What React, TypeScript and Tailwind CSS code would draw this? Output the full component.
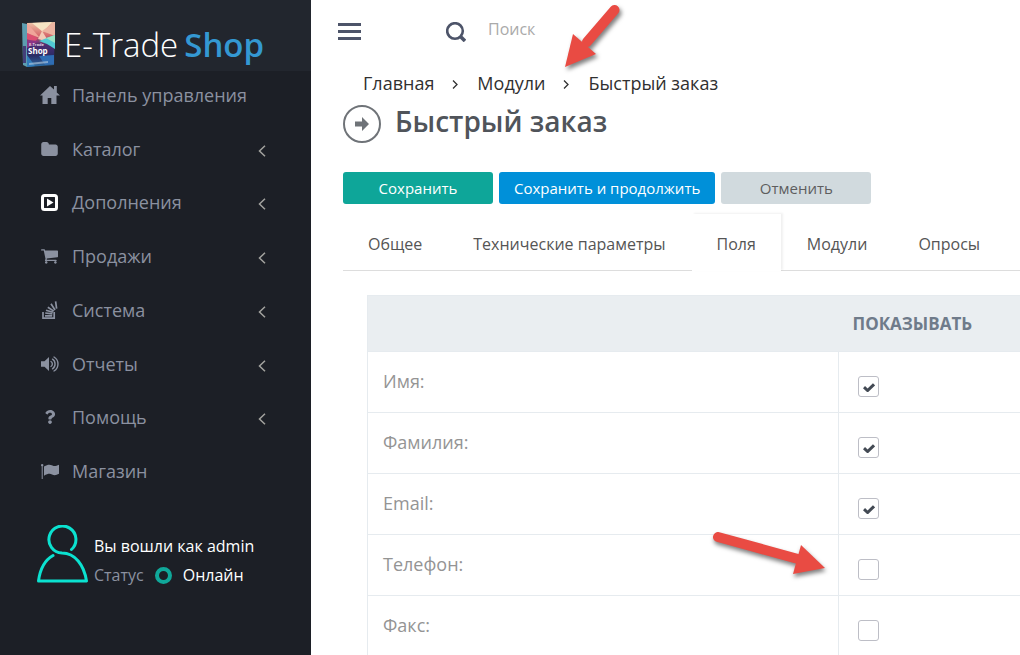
import type { ReactNode } from "react";
import { FaQuestion } from "react-icons/fa";
import clsx from "clsx";

function HomeIcon() {
  return (
    <svg viewBox="0 0 20 18" className="h-[18px] w-5 fill-current">
      <path d="M10 0 0 9.500h2.500V18h5.200v-6h3.600v6h5.200V9.500H20l-3.200-3V0h-2.800v3.600z" />
    </svg>
  );
}

function FolderIcon() {
  return (
    <svg viewBox="0 0 1664 1408" className="h-[14px] w-[17px] fill-current">
      <path d="M1664 480v704q0 92-66 158t-158 66H224q-92 0-158-66T0 1184V224q0-92 66-158T224 0h320q92 0 158 66t66 158v32h672q92 0 158 66t66 158z" />
    </svg>
  );
}

function PlayBoxIcon() {
  return (
    <svg viewBox="0 0 17 17" className="h-[17px] w-[17px] text-white">
      <rect x="1.500" y="1.500" width="14" height="14" rx="2" fill="none" stroke="currentColor" strokeWidth="3" />
      <path d="M6 4.500v8l6.500-4z" fill="currentColor" />
    </svg>
  );
}

function CartIcon() {
  return (
    <svg viewBox="0 0 1664 1408" className="h-[15px] w-[17px] fill-current">
      <path d="M640 1280q0 52-38 90t-90 38-90-38-38-90 38-90 90-38 90 38 38 90zm896 0q0 52-38 90t-90 38-90-38-38-90 38-90 90-38 90 38 38 90zm128-1088v512q0 24-16.500 42.500t-40.500 21.500l-1044 122q13 60 13 70 0 16-24 64h920q26 0 45 19t19 45-19 45-45 19H448q-26 0-45-19t-19-45q0-11 8-31.500t16-36 21.500-40 15.500-29.500L268 128H64q-26 0-45-19T0 64t19-45T64 0h256q16 0 28.500 6.500T368 22t13 24.500 8 26 5.500 29.500 4.500 26h1201q26 0 45 19t19 45z" />
    </svg>
  );
}

function StackIcon() {
  return (
    <svg viewBox="0 0 16 18" className="h-[18px] w-4" fill="none" stroke="currentColor" strokeWidth="1.700">
      <path d="M1 11v6.200h11.200V11" />
      <path d="M3 14.800h7.200M3.200 12l7.200.8M4 9.200l6.900 2.100M5.800 6.200l6 3.900M9 2.800l4 6.200M13.600.3l1 7.400" />
    </svg>
  );
}

function VolumeIcon() {
  return (
    <svg viewBox="0 0 18 16" className="h-4 w-[18px]" fill="none" stroke="currentColor" strokeWidth="1.400" strokeLinecap="round">
      <path d="M0 5.200h3.500L8 1v14l-4.500-4.200H0z" fill="currentColor" stroke="none" />
      <path d="M10 5.500c1.800 1 1.800 4 0 5M11.500 3.200c3.400 2 3.400 7.600 0 9.600M13 1c5.300 3 5.300 11 0 14" />
    </svg>
  );
}

function FlagIcon() {
  return (
    <svg viewBox="0 0 18 15" className="h-[15px] w-[18px] fill-current">
      <path d="M0 1.200a1.200 1.200 0 1 1 1.700 1.100V15H.7V2.300A1.200 1.200 0 0 1 0 1.200zM3 2.400C7 .2 9 .3 11.500 1.600c2 1 3.700.4 6.500-.9v9c-2.800 1.500-4.500 2-7 .7-2.200-1-4.500-.6-8 1.300z" />
    </svg>
  );
}

function UserIcon() {
  return (
    <svg viewBox="0 0 51 58" className="h-[58px] w-[51px] shrink-0 text-[#0be2d0]" fill="none" stroke="currentColor" strokeWidth="3" strokeLinecap="round" strokeLinejoin="round">
      <path d="M34.500 24.500A13.500 13.500 0 1 0 25 28c13 0 22 12 24.500 28h-48C3 44.500 8 35 16 30.500" />
    </svg>
  );
}

function ChevronIcon() {
  return (
    <svg viewBox="0 0 7 9" className="mx-[18px] mt-[3px] h-[9px] w-[7px]" fill="none" stroke="currentColor" strokeWidth="1.300">
      <path d="M1 .5 5 4.500 1 8.500" />
    </svg>
  );
}

function BoxLogo() {
  return (
    <svg viewBox="0 0 34 46" className="h-[46px] w-[34px] shrink-0">
      <defs>
        <linearGradient id="cover" x1="0" y1="0" x2="0" y2="1">
          <stop offset="0" stopColor="#efc6a8" />
          <stop offset=".3" stopColor="#d66a6c" />
          <stop offset=".5" stopColor="#4e2d72" />
          <stop offset=".75" stopColor="#2b2c66" />
          <stop offset="1" stopColor="#2a6fa5" />
        </linearGradient>
      </defs>
      <path d="M0 1 5 2v43l-4-2z" fill="#5d9db0" />
      <path d="M1 24h3v17H1z" fill="#43407a" />
      <path d="M5 1 33 0l-1 43-27 2z" fill="url(#cover)" />
      <path d="m5 1 13 15L5 11z" fill="#f0a59a" />
      <path d="m10 1 11 9L30 0z" fill="#f7e5c4" />
      <path d="m33 0-13 9 13 5z" fill="#ecb5a2" />
      <path d="m20 9-4 8 11 3z" fill="#f3cbb7" />
      <path d="m5 11 11 5-3 4-8-3z" fill="#dc4f72" />
      <path d="m33 13-16 6 8 3 8 5z" fill="#51c9d3" />
      <path d="m24 16 9-3v8z" fill="#9ae3c4" />
      <path d="m5 18 12 1-12 7z" fill="#8a3585" />
      <path d="m17 34 15-1v9l-9 1z" fill="#2f6db4" />
      <path d="m5 33 8 11-8 1z" fill="#317cba" />
      <text x="7" y="24" fontSize="4" fontWeight="700" fill="#e4d7e5" className="font-['Open_Sans',sans-serif]">E-Trade</text>
      <text x="6" y="32" fontSize="8" fontWeight="700" fill="#fff" className="font-['Open_Sans',sans-serif]">Shop</text>
      <path d="m7 41 19-2v2L7 43z" fill="#b8cce0" opacity=".6" />
    </svg>
  );
}

const menu: { label: string; icon: ReactNode; sub: boolean }[] = [
  { label: "Панель управления", icon: <HomeIcon />, sub: false },
  { label: "Каталог", icon: <FolderIcon />, sub: true },
  { label: "Дополнения", icon: <PlayBoxIcon />, sub: true },
  { label: "Продажи", icon: <CartIcon />, sub: true },
  { label: "Система", icon: <StackIcon />, sub: true },
  { label: "Отчеты", icon: <VolumeIcon />, sub: true },
  { label: "Помощь", icon: <FaQuestion className="h-[14px] w-[14px]" />, sub: true },
  { label: "Магазин", icon: <FlagIcon />, sub: false },
];

const tabs = ["Общее", "Технические параметры", "Поля", "Модули", "Опросы"];

const fields = [
  { id: "firstname", label: "Имя:", checked: true },
  { id: "lastname", label: "Фамилия:", checked: true },
  { id: "email", label: "Email:", checked: true },
  { id: "phone", label: "Телефон:", checked: false },
  { id: "fax", label: "Факс:", checked: false },
];

function Sidebar() {
  return (
    <aside className="w-[311px] shrink-0 bg-[#1c1f26]">
      <a href="#" className="flex h-[71px] items-center bg-[#22262e] pt-[18px] pl-[22px] text-[33px] leading-[46px]">
        <BoxLogo />
        <span className="ml-2 font-light text-white">E-Trade</span>
        <span className="ml-[6px] font-semibold text-[#3498d2]">Shop</span>
      </a>
      <nav>
        <ul className="grid h-[430px] auto-rows-fr">
          {menu.map(({ label, icon, sub }) => (
            <li key={label}>
              <a href="#" className="flex h-full items-center pb-[6px] text-lg text-[#8b91a0]">
                <span className="ml-[39px] flex w-[21px] justify-center">{icon}</span>
                <span className="ml-3 flex-1">{label}</span>
                {sub && (
                  <svg viewBox="0 0 8 12" className="mt-1 mr-[45px] h-3 w-2" fill="none" stroke="#a3a39f" strokeWidth="1.500">
                    <path d="M7 .8 1.500 6 7 11.200" />
                  </svg>
                )}
              </a>
            </li>
          ))}
        </ul>
      </nav>
      <div className="flex gap-[6px] pt-6 pl-[37px]">
        <UserIcon />
        <div className="pt-[7px] text-base leading-[29px] text-white">
          <div>Вы вошли как admin</div>
          <div className="flex items-center">
            <span className="text-[#8b91a0]">Статус</span>
            <span className="mx-[11px] h-[17px] w-[17px] rounded-full border-4 border-[#10a89a]" />
            <span>Онлайн</span>
          </div>
        </div>
      </div>
    </aside>
  );
}

function TopBar() {
  return (
    <header className="flex h-[63px] items-center pl-[27px]">
      <button type="button" aria-label="Меню" className="flex flex-col gap-1">
        <span className="h-[3px] w-[23px] bg-[#4d5469]" />
        <span className="h-[3px] w-[23px] bg-[#4d5469]" />
        <span className="h-[3px] w-[23px] bg-[#4d5469]" />
      </button>
      <button type="button" aria-label="Найти" className="ml-[85px]">
        <svg viewBox="0 0 20 20" className="h-5 w-5" fill="none" stroke="#4d5469">
          <circle cx="9" cy="9" r="7.800" strokeWidth="2.600" />
          <path d="m14 14 5 5" strokeWidth="3.600" />
        </svg>
      </button>
      <input
        type="search"
        aria-label="Поиск"
        placeholder="Поиск"
        className="ml-[22px] w-60 pb-[5px] text-base outline-none placeholder:text-[#aaaaaa]"
      />
    </header>
  );
}

function Breadcrumbs() {
  return (
    <nav className="flex items-center pl-[52px] text-lg leading-10 font-medium text-[#303030]">
      <a href="#">Главная</a>
      <ChevronIcon />
      <a href="#">Модули</a>
      <ChevronIcon />
      <a href="#">Быстрый заказ</a>
    </nav>
  );
}

function FieldsTable() {
  return (
    <table className="w-full table-fixed border-collapse border-y border-l border-[#e6ebef] text-left">
      <thead>
        <tr className="h-14 bg-[#eaeef1]">
          <th className="w-[471px]" />
          <th className="pl-[14px] text-[17px] font-bold text-[#6f7b8a]">ПОКАЗЫВАТЬ</th>
        </tr>
      </thead>
      <tbody>
        {fields.map(({ id, label, checked }) => (
          <tr key={id} className="h-[61px]">
            <td className="border border-[#e6ebef] pb-[2px] pl-[15px] text-lg text-[#949494]">
              <label htmlFor={id}>{label}</label>
            </td>
            <td className="border-y border-[#e6ebef] pt-2 pl-[19px]">
              <span className="relative block h-[21px] w-[21px]">
                <input
                  id={id}
                  type="checkbox"
                  defaultChecked={checked}
                  className="peer block h-[21px] w-[21px] appearance-none rounded-[3px] border border-[#bdbec6] bg-white"
                />
                <svg viewBox="0 0 12 9" className="pointer-events-none absolute top-[7px] left-[5px] hidden h-[9px] w-3 peer-checked:block" fill="none" stroke="#434a54" strokeWidth="3">
                  <path d="M1 4.200 4.600 7.500 11 1.300" />
                </svg>
              </span>
            </td>
          </tr>
        ))}
      </tbody>
    </table>
  );
}

function Arrows() {
  return (
    <>
      <svg viewBox="0 0 70 75" className="pointer-events-none absolute top-0 left-[560px] h-[75px] w-[70px] drop-shadow-[2px_3px_2px_rgba(0,0,0,0.5)]">
        <path d="M54.500 10 27 42" stroke="#e94b43" strokeWidth="10" strokeLinecap="round" />
        <path d="m5 67 8-33 23 20z" fill="#e94b43" />
      </svg>
      <svg viewBox="0 0 125 60" className="pointer-events-none absolute top-[525px] left-[705px] h-[60px] w-[125px] drop-shadow-[1px_3px_2px_rgba(0,0,0,0.5)]">
        <path d="m13 12 80 22" stroke="#e94b43" strokeWidth="10" strokeLinecap="round" />
        <path d="m120 43-32 6 8-29z" fill="#e94b43" />
      </svg>
    </>
  );
}

export default function App() {
  return (
    <div className="relative flex h-screen overflow-hidden bg-white font-['Open_Sans',sans-serif]">
      <Sidebar />
      <main className="min-w-0 flex-1">
        <TopBar />
        <Breadcrumbs />
        <div className="flex items-center pt-px pl-8">
          <svg viewBox="0 0 38 38" className="h-[38px] w-[38px]">
            <circle cx="19" cy="19" r="18" fill="none" stroke="#6f7378" strokeWidth="2" />
            <path d="M12 16.500h7V12l7 7-7 7v-4.500h-7z" fill="#6f7378" />
          </svg>
          <h1 className="ml-[14px] pb-[6px] text-[28px] leading-[34px] font-semibold text-[#50545a]">Быстрый заказ</h1>
        </div>

        <div className="flex gap-[6px] pt-[28px] pl-8 text-[15px] font-medium text-white">
          <button type="button" className="h-8 w-[150px] rounded-[3px] bg-[#0ea699]">Сохранить</button>
          <button type="button" className="h-8 rounded-[3px] bg-[#0090d9] px-[15px]">Сохранить и продолжить</button>
          <button type="button" className="h-8 w-[150px] rounded-[3px] bg-[#d1dade] font-normal text-[#5e5e5e]">Отменить</button>
        </div>

        <div role="tablist" className="mt-[10px] ml-8 flex gap-px border-b border-[#dddddd] text-base text-[#555555]">
          {tabs.map((tab) => (
            <button
              key={tab}
              type="button"
              role="tab"
              aria-selected={tab === "Поля"}
              className={clsx(
                "h-14 shrink-0 px-[25px] pt-[3px] whitespace-nowrap",
                tab === "Поля" && "-mb-px h-[57px] bg-white shadow-[2px_-1px_2px_rgba(0,0,0,0.06)]"
              )}
            >
              {tab}
            </button>
          ))}
        </div>

        <div className="pt-6 pl-14">
          <FieldsTable />
        </div>
      </main>
      <Arrows />
    </div>
  );
}
